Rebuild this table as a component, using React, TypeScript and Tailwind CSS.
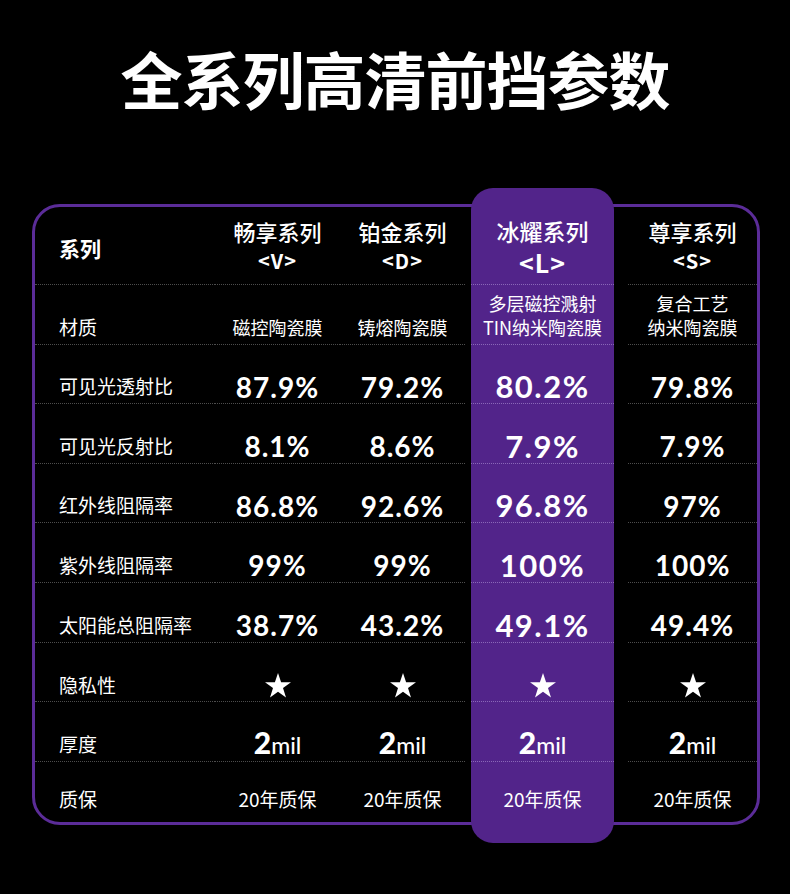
import React from 'react';

const cjk = "font-['Noto_Sans_CJK_SC','Noto_Sans',sans-serif]";
const num = "font-['Lato','Noto_Sans_CJK_SC',sans-serif]";

type Series = {
  name: string;
  code: string;
  material: string[];
  values: string[];
  hl?: boolean;
  extraClass: string;
};

const series: Series[] = [
  { name: '畅享系列', code: '<V>', material: ['磁控陶瓷膜'], values: ['87.9%', '8.1%', '86.8%', '99%', '38.7%'], extraClass: 'w-[125px]' },
  { name: '铂金系列', code: '<D>', material: ['铸熔陶瓷膜'], values: ['79.2%', '8.6%', '92.6%', '99%', '43.2%'], extraClass: 'w-[131px] pr-[6px]' },
  { name: '冰耀系列', code: '<L>', material: ['多层磁控溅射', 'TIN纳米陶瓷膜'], values: ['80.2%', '7.9%', '96.8%', '100%', '49.1%'], hl: true, extraClass: 'w-[143px]' },
  { name: '尊享系列', code: '<S>', material: ['复合工艺', '纳米陶瓷膜'], values: ['79.8%', '7.9%', '97%', '100%', '49.4%'], extraClass: 'w-[143px] pl-[14px]' },
];

const labels = ['可见光透射比', '可见光反射比', '红外线阻隔率', '紫外线阻隔率', '太阳能总阻隔率'];
const valueRowH = ['h-[59px]', 'h-[60px]', 'h-[59px]', 'h-[60px]', 'h-[60px]'];

function Star() {
  return (
    <svg width="26" height="25" viewBox="0 0 26 25">
      <polygon
        fill="white"
        points="13,0 16.1,9.3 26,9.3 18,15.1 21,24.6 13,18.8 5,24.6 8,15.1 0,9.3 9.9,9.3"
      />
    </svg>
  );
}

function Column({ s }: { s: Series }) {
  const line = s.hl ? 'border-[#8a68b8]' : 'border-[#4d4d4d]';
  const cell = `border-b border-dotted ${line} flex justify-center items-center`;
  return (
    <div
      className={`${s.extraClass} flex flex-col shrink-0 ${
        s.hl ? 'bg-[#52248a] rounded-[22px] -mt-[19px] pt-[19px] -mb-[21px] pb-[21px]' : ''
      }`}
    >
      {/* header */}
      <div className={`h-[78px] ${cell} flex-col ${s.hl ? 'pt-[4px]' : ''}`}>
        <div className={`${cjk} ${s.hl ? 'text-[23px] leading-[28px]' : 'text-[22px] leading-[31px]'} font-medium text-white`}>{s.name}</div>
        <div className={`${cjk} ${s.hl ? 'text-[25px] leading-[34px]' : 'text-[20px] leading-[28px]'} font-bold text-white tracking-[1px]`}>{s.code}</div>
      </div>
      {/* material */}
      <div className={`h-[60px] ${cell} flex-col !justify-end pb-[5px]`}>
        {s.material.map((m) => (
          <div key={m} className={`${cjk} text-[18px] leading-[24px] text-white`}>{m}</div>
        ))}
      </div>
      {s.values.map((v, i) => (
        <div key={i} className={`${valueRowH[i]} ${cell} pt-[25px]`}>
          <span
            className={`${num} font-bold text-white leading-none ${
              s.hl ? 'text-[31px] tracking-[1.5px]' : 'text-[28px] tracking-[1px]'
            }`}
          >
            {v}
          </span>
        </div>
      ))}
      {/* privacy */}
      <div className={`h-[59px] ${cell} pt-[26px]`}>
        <Star />
      </div>
      {/* thickness */}
      <div className={`h-[60px] ${cell} pt-[20px]`}>
        <span className={`${num} text-white leading-none`}>
          <span className="text-[30px] font-black">2</span>
          <span className="text-[23px] font-medium">mil</span>
        </span>
      </div>
      {/* warranty */}
      <div className="h-[60px] flex justify-center items-center pt-[14px]">
        <span className={`${cjk} text-[19px] text-white`}>20年质保</span>
      </div>
    </div>
  );
}

export default function App() {
  const labelCell = 'border-b border-dotted border-[#4d4d4d] flex items-center pl-[24px]';
  return (
    <div className={`w-[790px] h-[894px] bg-black ${cjk} overflow-hidden`}>
      <h1 className="pt-[47px] text-center text-[62px] leading-none font-bold text-white tracking-[-1px]">
        全系列高清前挡参数
      </h1>

      {/* Table */}
      <div className="mt-[95px] ml-[32px] w-[728px] border-[3px] border-[#5b2c98] rounded-[28px] flex">
        {/* label column */}
        <div className="w-[180px] shrink-0 flex flex-col">
          <div className={`h-[78px] ${labelCell} pt-[6px]`}>
            <span className="text-[21px] font-bold text-white">系列</span>
          </div>
          <div className={`h-[60px] ${labelCell} !items-end pb-[5px]`}>
            <span className="text-[19px] leading-[24px] text-white">材质</span>
          </div>
          {labels.map((l, i) => (
            <div key={l} className={`${valueRowH[i]} ${labelCell} pt-[25px]`}>
              <span className="text-[19px] text-white">{l}</span>
            </div>
          ))}
          <div className={`h-[59px] ${labelCell} pt-[26px]`}>
            <span className="text-[19px] text-white">隐私性</span>
          </div>
          <div className={`h-[60px] ${labelCell} pt-[26px]`}>
            <span className="text-[19px] text-white">厚度</span>
          </div>
          <div className="h-[60px] flex items-center pl-[24px] pt-[14px]">
            <span className="text-[19px] text-white">质保</span>
          </div>
        </div>

        {series.map((s) => (
          <Column key={s.name} s={s} />
        ))}
      </div>
    </div>
  );
}
